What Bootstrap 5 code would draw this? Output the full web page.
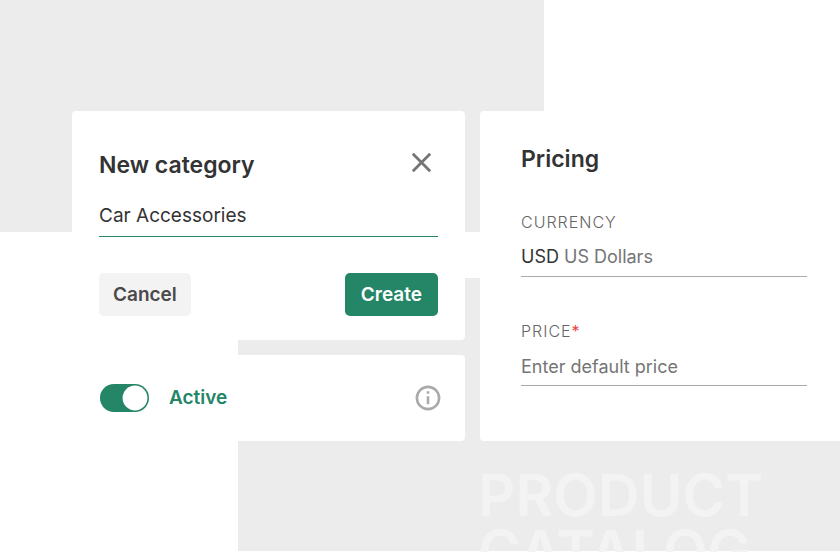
<!DOCTYPE html>
<html lang="en">
<head>
<meta charset="utf-8">
<meta name="viewport" content="width=device-width, initial-scale=1">
<title>Product catalog</title>
<link href="https://cdn.jsdelivr.net/npm/bootstrap@5.3.0/dist/css/bootstrap.min.css" rel="stylesheet">
<style>
  :root { --green: #248567; --ink: #333; --muted: #757575; --backdrop: #ececec; }
  body { font-family: Inter, "Liberation Sans", sans-serif; color: var(--ink); background: #fff; }
  .stage {
    padding: 111px 0 1px 72px;
    background:
      linear-gradient(var(--backdrop), var(--backdrop)) left top / calc(100% - 296px) 232px no-repeat,
      linear-gradient(var(--backdrop), var(--backdrop)) right 0 bottom 1px / calc(100% - 238px) calc(100% - 279px) no-repeat;
  }
  .panels { display: grid; grid-template-columns: 393fr 360fr; gap: 15px; }
  .stack { gap: 15px; }
  .panel { background: #fff; border-radius: 4px; }
  .category-panel { padding: 34px 27px 24px; }
  .active-panel { padding: 28px 24px 28px 28px; }
  .pricing-panel { padding: 32px 33px 31px 41px; border-radius: 4px 0 0 4px; }
  .panel-title { font-size: 23px; line-height: 32px; font-weight: 600; margin: 0; }
  .close-btn { width: 32px; height: 32px; color: #757575; }
  .line-field {
    display: block; width: 100%; padding: 0; border: 0; border-bottom: 1px solid #aaa; border-radius: 0;
    background: transparent; color: var(--ink); text-align: left; font-size: 18px; line-height: 28px;
  }
  .line-field::placeholder { color: var(--muted); opacity: 1; }
  .name-field { border-color: var(--green); font-size: 19px; line-height: 32px; height: 37px; padding-bottom: 5px; margin-top: 19px; }
  .price-field { height: 34px; padding-bottom: 5px; }
  .currency-name { color: var(--muted); }
  .pricing-fields { padding-top: 37px; }
  .currency-group { margin-bottom: 44px; }
  .field-label { display: block; font-size: 16px; line-height: 20px; font-weight: 300; letter-spacing: 1px; color: #666; margin-bottom: 11px; }
  .required-mark { color: #e8453c; font-weight: 400; }
  .soft-btn { font-size: 19px; line-height: 27px; font-weight: 600; padding: 8px 14px; border: 0; border-radius: 5px; }
  .cancel-btn, .cancel-btn:hover { background: #f3f3f3; color: #4a4a4a; }
  .create-btn, .create-btn:hover { background: var(--green); color: #fff; padding: 8px 16px; }
  .active-switch { padding: 0; margin: 0; min-height: 0; gap: 20px; }
  .active-switch .form-check-input { width: 49px; height: 28px; margin: 0; float: none; border: 0; }
  .active-switch .form-check-input:checked {
    background-color: var(--green);
    background-image: url("data:image/svg+xml,%3csvg xmlns='http://www.w3.org/2000/svg' viewBox='-4 -4 8 8'%3e%3ccircle r='3.55' fill='%23fff'/%3e%3c/svg%3e");
  }
  .active-label { font-size: 19px; line-height: 28px; font-weight: 600; color: var(--green); }
  .info-btn { width: 26px; height: 26px; color: #aaa; }
  .watermark { padding-left: 406px; margin: 26px 0 0; font-size: 58px; line-height: 56px; font-weight: 600; color: #f3f3f3; }
</style>
</head>
<body>
<main class="stage vh-100 d-flex flex-column overflow-hidden">
  <div class="panels flex-shrink-0">
    <div class="stack d-flex flex-column">
      <form class="panel category-panel">
        <div class="d-flex justify-content-between align-items-center">
          <h2 class="panel-title pt-1"><label for="category">New category</label></h2>
          <button type="button" class="close-btn btn p-0 border-0 d-flex" aria-label="Close">
            <svg width="32" height="32" viewBox="0 0 32 32" fill="none" stroke="currentColor" stroke-width="2.8"><path d="M6.8 6.8l17.4 17.4M24.2 6.8L6.8 24.2"/></svg>
          </button>
        </div>
        <input id="category" class="line-field name-field" type="text" value="Car Accessories">
        <div class="d-flex justify-content-between pt-4 mt-2">
          <button type="button" class="btn soft-btn cancel-btn mt-1">Cancel</button>
          <button type="button" class="btn soft-btn create-btn mt-1">Create</button>
        </div>
      </form>
      <div class="panel active-panel flex-grow-1 d-flex justify-content-between align-items-center">
        <div class="form-check form-switch active-switch d-flex align-items-center">
          <input id="active" class="form-check-input" type="checkbox" role="switch" checked>
          <label for="active" class="active-label">Active</label>
        </div>
        <button type="button" class="info-btn btn p-0 border-0 d-flex" aria-label="More information">
          <svg width="26" height="26" viewBox="0 0 26 26" fill="none" stroke="currentColor"><circle cx="13" cy="13" r="11.1" stroke-width="2.6"/><path d="M13 11.3v8M13 6.2v2.6" stroke-width="2.6"/></svg>
        </button>
      </div>
    </div>
    <form class="panel pricing-panel">
      <h2 class="panel-title">Pricing</h2>
      <div class="pricing-fields mb-4">
        <div class="currency-group">
          <label class="field-label" for="currency">CURRENCY</label>
          <button id="currency" type="button" class="line-field price-field">USD <span class="currency-name">US Dollars</span></button>
        </div>
        <label class="field-label" for="price">PRICE<span class="required-mark">*</span></label>
        <input id="price" class="line-field price-field" type="text" placeholder="Enter default price" required>
      </div>
    </form>
  </div>
  <h1 class="watermark">PRODUCT<br>CATALOG</h1>
</main>
<script src="https://cdn.jsdelivr.net/npm/bootstrap@5.3.0/dist/js/bootstrap.bundle.min.js"></script>
</body>
</html>
